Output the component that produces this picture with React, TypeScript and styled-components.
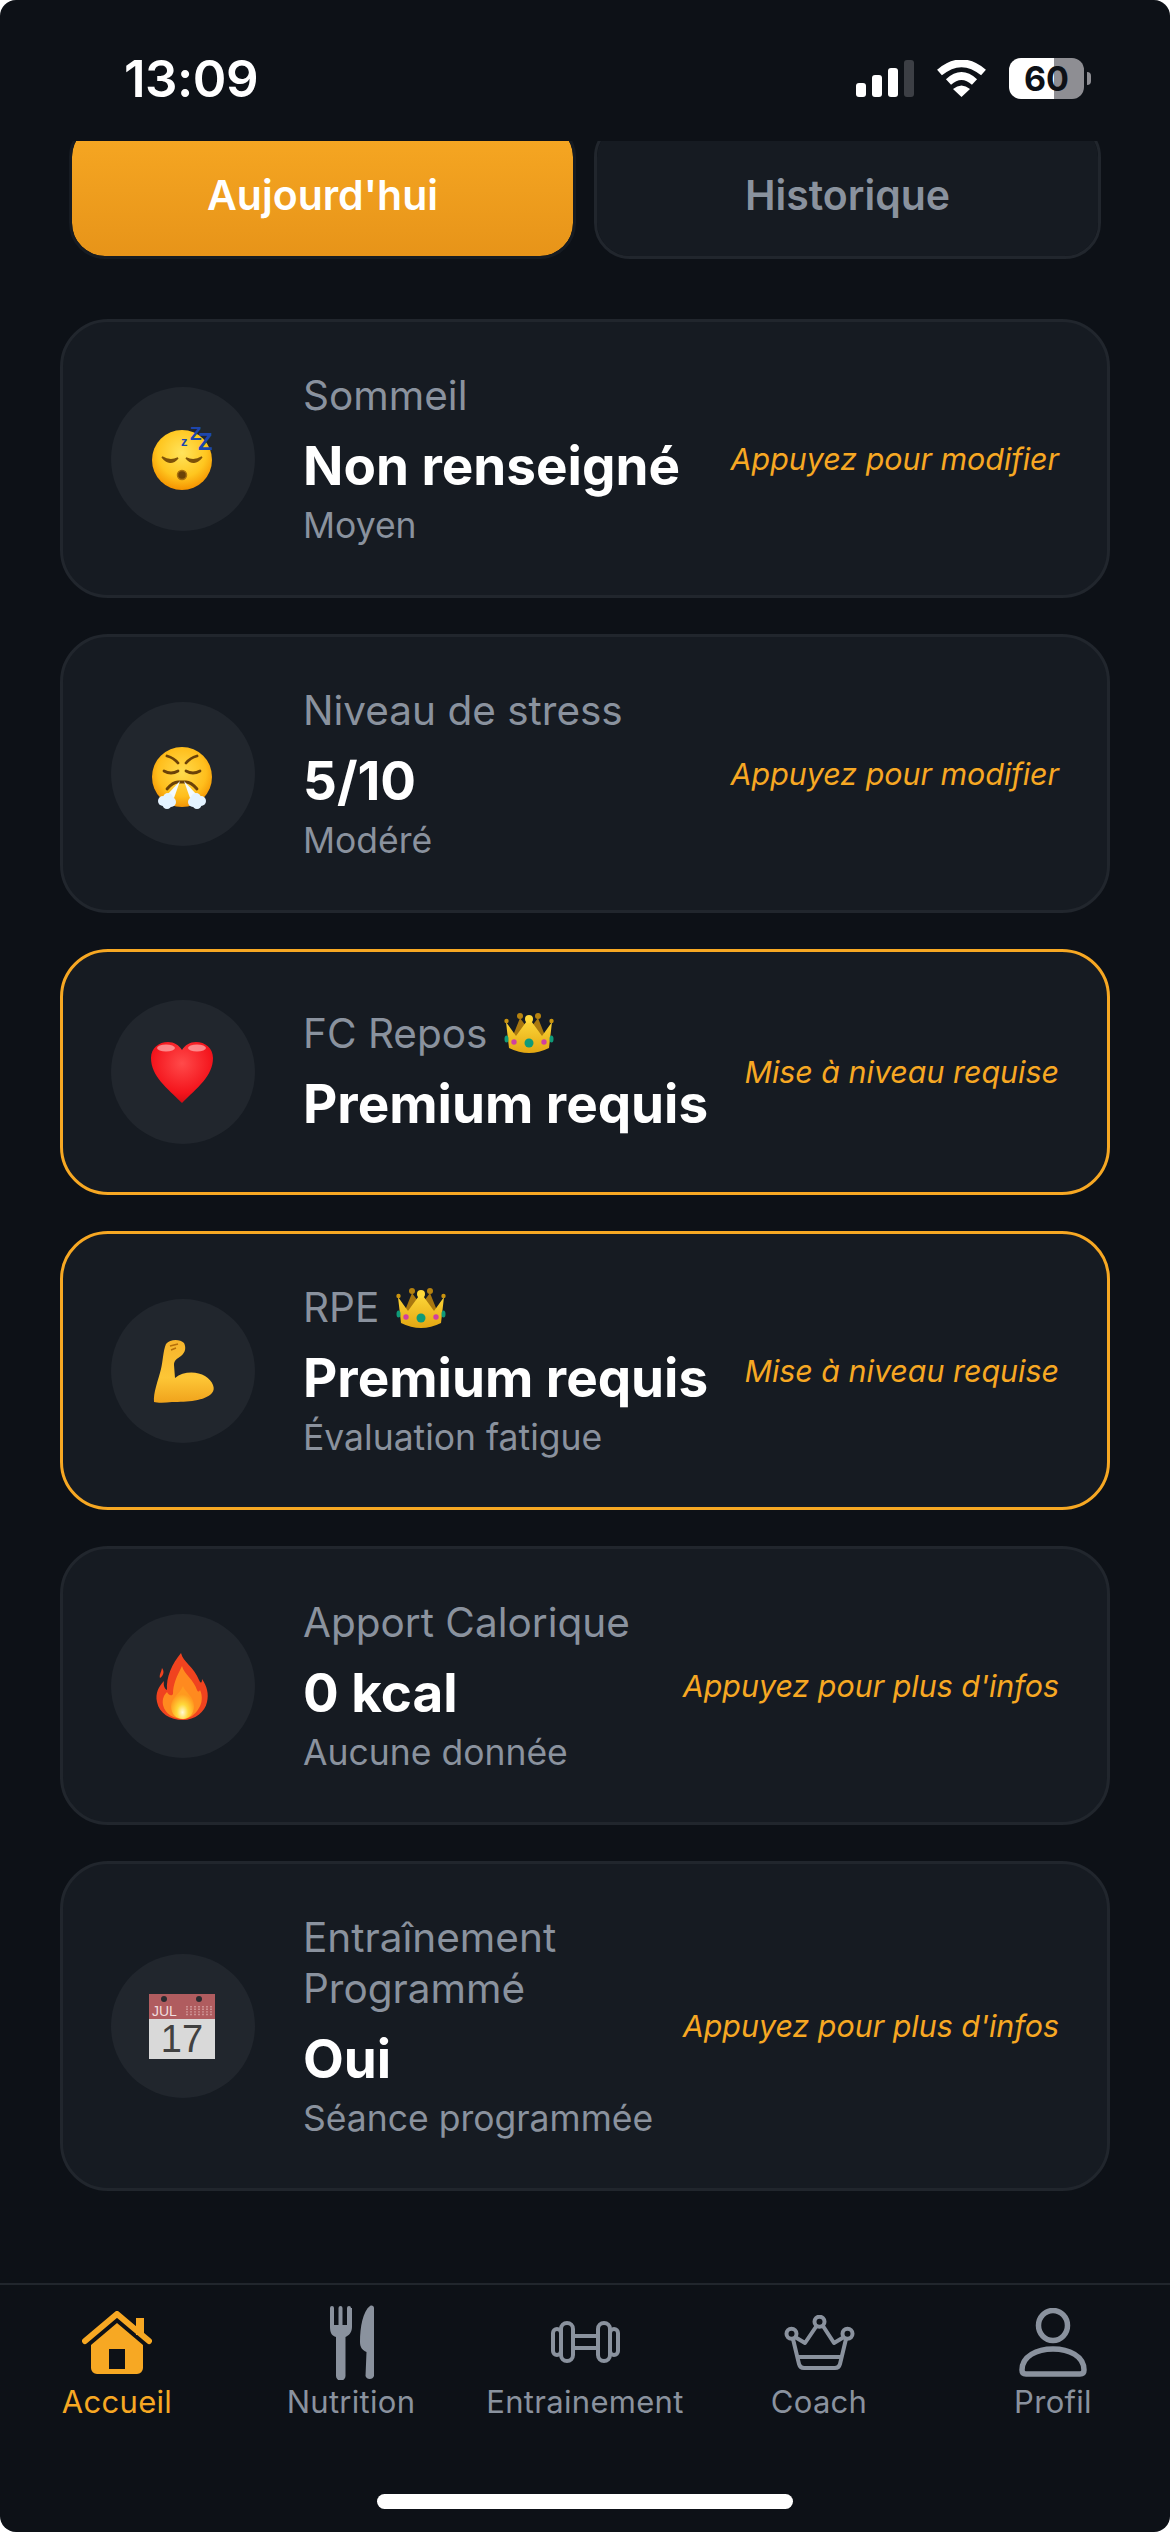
import React from 'react'
import styled, { createGlobalStyle } from 'styled-components'

const GlobalStyle = createGlobalStyle`
    html, body {
        margin: 0;
        padding: 0;
        background: #ffffff;
    }
    * {
        box-sizing: border-box;
    }
`

const ORANGE = '#f7a823'
const GREY = '#8a929e'

const Screen = styled.div`
    width: 1170px;
    height: 2532px;
    display: flex;
    flex-direction: column;
    overflow: hidden;
    border-radius: 16px;
    background: #0d1117;
    font-family: Inter, 'Noto Sans', sans-serif;
`

const StatusBar = styled.div`
    height: 141px;
    flex: none;
    padding: 15px 79px 0 124px;
    display: flex;
    align-items: center;
    justify-content: space-between;
`

const Time = styled.span`
    font-size: 51px;
    font-weight: 600;
    letter-spacing: -0.5px;
    color: #ffffff;
`

const StatusIcons = styled.div`
    display: flex;
    align-items: center;
    gap: 22px;
`

const Battery = styled.div`
    position: relative;
    width: 75px;
    height: 41px;
    margin-right: 7px;
    border-radius: 12px;
    background: linear-gradient(90deg, #ffffff 60%, #8e8e93 60%);
    display: flex;
    align-items: center;
    justify-content: center;
    font-size: 34px;
    font-weight: 700;
    color: #0d1117;

    &::after {
        content: '';
        position: absolute;
        left: 78px;
        top: 14px;
        width: 4px;
        height: 13px;
        border-radius: 0 6px 6px 0;
        background: #8e8e93;
    }
`

const Scroller = styled.div`
    flex: 1;
    min-height: 0;
    overflow: hidden;
`

const TabRow = styled.div`
    margin-top: -20px;
    padding: 0 69px;
    display: grid;
    grid-template-columns: 1fr 1fr;
    gap: 18px;
`

const Tab = styled.div<{ $active?: boolean }>`
    height: 138px;
    border-radius: 36px;
    border: 3px solid ${(p) => (p.$active ? '#161b22' : '#21262d')};
    background: ${(p) =>
        p.$active ? 'linear-gradient(#f7a823, #e79419)' : '#161b22'};
    background-clip: padding-box;
    padding-top: 9px;
    display: flex;
    align-items: center;
    justify-content: center;
    font-size: 41px;
    font-weight: 600;
    color: ${(p) => (p.$active ? '#ffffff' : GREY)};
`

const CardList = styled.div`
    margin-top: 60px;
    padding: 0 60px;
    display: flex;
    flex-direction: column;
    gap: 36px;
`

const Card = styled.div<{ $premium?: boolean }>`
    padding: 48px;
    border-radius: 48px;
    border: 3px solid ${(p) => (p.$premium ? ORANGE : '#21262d')};
    background: #161b22;
    display: flex;
    align-items: center;
`

const EmojiCircle = styled.div`
    width: 144px;
    height: 144px;
    flex: none;
    margin-right: 48px;
    border-radius: 50%;
    background: #21262d;
    display: flex;
    align-items: center;
    justify-content: center;
`

const CardBody = styled.div`
    flex: 1;
    min-width: 0;
    padding-right: 20px;
`

const CardLabel = styled.div`
    display: flex;
    align-items: center;
    gap: 17px;
    font-size: 40.5px;
    line-height: 51px;
    color: ${GREY};
`

const CardValue = styled.div`
    margin-top: 12px;
    font-size: 53px;
    line-height: 66px;
    font-weight: 700;
    color: #ffffff;
`

const CardSub = styled.div`
    margin-top: 5px;
    font-size: 35.5px;
    line-height: 43px;
    color: ${GREY};
`

const Hint = styled.div`
    flex: none;
    font-size: 30.4px;
    font-style: italic;
    color: ${ORANGE};
`

const TabBar = styled.div`
    height: 249px;
    flex: none;
    padding-top: 18px;
    border-top: 2px solid #21262d;
    display: flex;
    flex-direction: column;
    align-items: center;
`

const NavRow = styled.div`
    width: 100%;
    display: grid;
    grid-template-columns: repeat(5, 1fr);
`

const NavItem = styled.div<{ $active?: boolean }>`
    display: flex;
    flex-direction: column;
    align-items: center;
    font-size: 31px;
    letter-spacing: 0.3px;
    line-height: 40px;
    color: ${(p) => (p.$active ? ORANGE : GREY)};
`

const NavIcon = styled.div`
    height: 78px;
    margin-bottom: 1px;
    display: flex;
    align-items: center;
    justify-content: center;
`

const HomeBar = styled.div`
    width: 416px;
    height: 15px;
    margin-top: 72px;
    border-radius: 8px;
    background: #ffffff;
`

const SignalIcon = () => (
    <svg width="58" height="37" viewBox="0 0 58 37">
        <rect x="0" y="23" width="10" height="14" rx="3" fill="#fff" />
        <rect x="16" y="15" width="10" height="22" rx="3" fill="#fff" />
        <rect x="32" y="8" width="10" height="29" rx="3" fill="#fff" />
        <rect x="48" y="0" width="10" height="37" rx="3" fill="#3c3f45" />
    </svg>
)

const WifiIcon = () => (
    <svg width="51" height="37" viewBox="0 0 51 37" fill="none">
        <path d="M3.5 12.5Q25.5 -6 47.5 12.5" stroke="#fff" strokeWidth="7.5" />
        <path d="M12.5 22Q25.5 10 38.5 22" stroke="#fff" strokeWidth="7.5" />
        <path d="M17 29Q25.5 22 34 29L25.5 37Z" fill="#fff" />
    </svg>
)

const SleepyEmoji = () => (
    <svg width="72" height="72" viewBox="0 0 72 72">
        <defs>
            <radialGradient id="faceA" cx="50%" cy="38%" r="62%">
                <stop offset="0%" stopColor="#ffe45c" />
                <stop offset="65%" stopColor="#ffc61f" />
                <stop offset="100%" stopColor="#f59300" />
            </radialGradient>
        </defs>
        <circle cx="35" cy="37" r="30" fill="url(#faceA)" />
        <path d="M15 34Q23 44 31 35Q23 39 15 34Z" fill="#7d5209" stroke="#7d5209" strokeWidth="1.5" />
        <path d="M39 35Q47 44 55 34Q47 39 39 35Z" fill="#7d5209" stroke="#7d5209" strokeWidth="1.5" />
        <circle cx="35" cy="52" r="4.5" fill="#6b4208" stroke="#a9720f" strokeWidth="1.5" />
        <g fontFamily="'Liberation Sans', sans-serif" fontWeight="700" fill="#1d46ad">
            <text x="34" y="23" fontSize="13">z</text>
            <text x="43" y="17" fontSize="19">Z</text>
            <text x="51" y="27" fontSize="24">Z</text>
        </g>
    </svg>
)

const HuffEmoji = () => (
    <svg width="72" height="72" viewBox="0 0 72 72">
        <defs>
            <radialGradient id="faceB" cx="50%" cy="42%" r="62%">
                <stop offset="0%" stopColor="#ffdb4d" />
                <stop offset="65%" stopColor="#ffbe1c" />
                <stop offset="100%" stopColor="#f08c00" />
            </radialGradient>
        </defs>
        <circle cx="35" cy="39" r="30" fill="url(#faceB)" />
        <g fill="none" stroke="#6b4208" strokeWidth="2.8" strokeLinecap="round">
            <path d="M20 18Q27 20 31 25" />
            <path d="M50 18Q43 20 39 25" />
            <path d="M17 33Q24 37 31 33" />
            <path d="M39 33Q46 37 53 33" />
            <path d="M20 51Q26 44 31 44H39Q44 44 50 51" />
        </g>
        <path d="M33 43L19 58L27 60Z" fill="#f3fbff" />
        <path d="M37 43L51 58L43 60Z" fill="#f3fbff" />
        <g fill="#e4f3ff">
            <circle cx="16" cy="63" r="5" />
            <circle cx="21" cy="60" r="5" />
            <circle cx="24" cy="64" r="5" />
            <circle cx="20" cy="66.5" r="4.5" />
            <circle cx="46" cy="64" r="5" />
            <circle cx="49" cy="60" r="5" />
            <circle cx="54" cy="63" r="5" />
            <circle cx="50" cy="66.5" r="4.5" />
        </g>
    </svg>
)

const HeartEmoji = () => (
    <svg width="72" height="72" viewBox="0 0 72 72">
        <defs>
            <radialGradient id="heartFill" cx="50%" cy="35%" r="70%">
                <stop offset="0%" stopColor="#ff4a4a" />
                <stop offset="70%" stopColor="#f4141c" />
                <stop offset="100%" stopColor="#c80a12" />
            </radialGradient>
        </defs>
        <path
            d="M35 67C20 52 4 40 4 22C4 12 12 6 21 6C27 6 32 9 35 14C38 9 43 6 49 6C58 6 66 12 66 22C66 40 50 52 35 67Z"
            fill="url(#heartFill)"
        />
        <ellipse cx="19" cy="12" rx="9" ry="3.5" fill="#ffb3b3" opacity="0.7" />
        <ellipse cx="50" cy="12" rx="9" ry="3.5" fill="#ffb3b3" opacity="0.7" />
    </svg>
)

const MuscleEmoji = () => (
    <svg width="72" height="72" viewBox="0 0 72 72">
        <defs>
            <linearGradient id="armFill" x1="0" y1="0" x2="0" y2="1">
                <stop offset="0%" stopColor="#f6b42c" />
                <stop offset="60%" stopColor="#fdc636" />
                <stop offset="100%" stopColor="#f0a31c" />
            </linearGradient>
        </defs>
        <path
            d="M19 9C23 4 33 4 37 8C39 12 39 17 34 21C30 24 27 25 27 30L28 43C36 36 50 36 58 41C66 46 69 54 65 58C58 66 40 67 25 67C18 68 10 68 7 67C6 58 11 46 14 34C16 26 16 16 19 9Z"
            fill="url(#armFill)"
        />
        <path d="M23 11L31 9M24 15L29 13" stroke="#b56f0a" strokeWidth="1.4" fill="none" />
    </svg>
)

const FireEmoji = () => (
    <svg width="72" height="72" viewBox="0 0 72 72">
        <defs>
            <radialGradient id="fireCore" cx="50%" cy="80%" r="55%">
                <stop offset="0%" stopColor="#fffbd6" />
                <stop offset="45%" stopColor="#ffd83a" />
                <stop offset="100%" stopColor="#ff9a1f" />
            </radialGradient>
        </defs>
        <path
            d="M34 3C36 12 47 17 52 30C54 34 55 33 55 29C60 36 62 44 60 52C58 62 48 70 36 70C23 70 12 63 10 52C8 43 12 36 17 31C16 36 18 39 20 40C19 27 25 14 34 3Z"
            fill="#f0431f"
        />
        <path d="M15 18C14 23 12 25 13 28C16 26 18 22 15 18Z" fill="#f0431f" />
        <path
            d="M35 16C37 24 47 30 50 40C51 42 52 42 53 40C56 46 55 54 52 58C48 65 42 69 36 69C27 69 18 64 16 55C15 49 17 45 20 42C22 46 25 46 26 44C26 34 30 26 35 16Z"
            fill="#ff8a1f"
        />
        <path
            d="M36 36C38 42 47 47 47 56C47 64 42 69 36 69C29 69 24 64 24 56C24 48 33 44 36 36Z"
            fill="url(#fireCore)"
        />
    </svg>
)

const CalendarEmoji = () => (
    <svg width="72" height="72" viewBox="0 0 72 72">
        <rect x="2" y="4" width="66" height="65" fill="#d9d9d9" />
        <rect x="2" y="4" width="66" height="25" fill="#b05c5f" />
        <circle cx="17" cy="9" r="3" fill="#2b2b30" />
        <circle cx="52" cy="9" r="3" fill="#2b2b30" />
        <g fontFamily="'Liberation Sans', sans-serif">
            <text x="5" y="26" fontSize="14" fill="#f0dede">JUL</text>
            <text x="35" y="62" fontSize="38" fill="#414141" textAnchor="middle">17</text>
        </g>
        <path
            d="M40 16V26M44 16V26M48 16V26M52 16V26M56 16V26M60 16V26M64 16V26"
            stroke="#dba9aa"
            strokeWidth="1.4"
            strokeDasharray="1.4 1.2"
        />
    </svg>
)

const CrownEmoji = () => (
    <svg width="50" height="42" viewBox="0 0 50 42">
        <defs>
            <linearGradient id="crownFill" x1="0" y1="0" x2="0" y2="1">
                <stop offset="0%" stopColor="#ffd93b" />
                <stop offset="100%" stopColor="#e3a712" />
            </linearGradient>
        </defs>
        <path d="M8 26L16 6L25 18L34 6L42 26Z" fill="#a9780f" />
        <path d="M5 36L2 10L12 24L25 6L38 24L48 10L45 36Q25 46 5 36Z" fill="url(#crownFill)" />
        <circle cx="16" cy="4" r="3" fill="#b5820f" />
        <circle cx="34" cy="4" r="3" fill="#b5820f" />
        <circle cx="25" cy="7" r="4" fill="#ffd93b" />
        <circle cx="2.5" cy="9" r="2.2" fill="#c9930f" />
        <circle cx="47.5" cy="9" r="2.2" fill="#c9930f" />
        <circle cx="25" cy="31" r="4.5" fill="#0f9a78" />
        <circle cx="10" cy="30" r="2.7" fill="#d13fa0" />
        <circle cx="40" cy="30" r="2.7" fill="#d13fa0" />
        <ellipse cx="2.5" cy="27" rx="2" ry="3.5" fill="#0f9a78" />
        <ellipse cx="47.5" cy="27" rx="2" ry="3.5" fill="#0f9a78" />
    </svg>
)

const HomeIcon = () => (
    <svg width="70" height="63" viewBox="0 0 70 63">
        <path d="M3 30L35 3L67 30" fill="none" stroke={ORANGE} strokeWidth="6" strokeLinecap="round" strokeLinejoin="round" />
        <rect x="54" y="7" width="8" height="17" fill={ORANGE} />
        <path
            d="M35 12L61 34V57A6 6 0 0 1 55 63H15A6 6 0 0 1 9 57V34ZM27 38V58H43V38Z"
            fill={ORANGE}
            fillRule="evenodd"
        />
    </svg>
)

const CutleryIcon = () => (
    <svg width="45" height="75" viewBox="0 0 45 75" fill={GREY}>
        <path d="M1 3A2 2 0 0 1 5 3V20H9.5V3A2 2 0 0 1 13.5 3V20H18V3A2 2 0 0 1 22 3H23V22C23 28 19 31 16.5 32V71A4.5 4.5 0 0 1 7 71V32C3 31 1 28 1 22Z" />
        <path d="M45 3V71A4.5 4.5 0 0 1 36.5 71L37.5 47C33 45 31 42 31 37C31 22 34 6 41 1C43 0 45 1 45 3Z" />
    </svg>
)

const DumbbellIcon = () => (
    <svg width="69" height="42" viewBox="0 0 69 42" fill="none" stroke={GREY} strokeWidth="4">
        <rect x="2" y="8" width="8" height="26" rx="4" />
        <rect x="10" y="2" width="12" height="38" rx="6" />
        <rect x="47" y="2" width="12" height="38" rx="6" />
        <rect x="59" y="8" width="8" height="26" rx="4" />
        <rect x="22" y="15" width="25" height="12" />
    </svg>
)

const CrownIcon = () => (
    <svg width="71" height="55" viewBox="0 0 71 55" fill="none" stroke={GREY} strokeWidth="4" strokeLinejoin="round">
        <circle cx="35.5" cy="6.7" r="5" />
        <circle cx="7.5" cy="18.7" r="5" />
        <circle cx="63.5" cy="18.7" r="5" />
        <path d="M11 22L21 28L32.5 11M39 11L50 28L60 22" />
        <path d="M9 24L15 49Q16 53 20 53H51Q55 53 56 49L62 24" />
        <path d="M13 42H58" />
    </svg>
)

const ProfileIcon = () => (
    <svg width="68" height="69" viewBox="0 0 68 69" fill="none" stroke={GREY} strokeWidth="5.5">
        <ellipse cx="34" cy="17.5" rx="14.5" ry="15" />
        <path d="M3 62C3 48 18 41 34 41C50 41 65 48 65 62Q65 66 61 66H7Q3 66 3 62Z" />
    </svg>
)

type Metric = {
    emoji: React.ReactNode
    label: string
    value: string
    sub?: string
    hint: string
    premium?: boolean
}

const metrics: Metric[] = [
    { emoji: <SleepyEmoji />, label: 'Sommeil', value: 'Non renseigné', sub: 'Moyen', hint: 'Appuyez pour modifier' },
    { emoji: <HuffEmoji />, label: 'Niveau de stress', value: '5/10', sub: 'Modéré', hint: 'Appuyez pour modifier' },
    { emoji: <HeartEmoji />, label: 'FC Repos', value: 'Premium requis', hint: 'Mise à niveau requise', premium: true },
    { emoji: <MuscleEmoji />, label: 'RPE', value: 'Premium requis', sub: 'Évaluation fatigue', hint: 'Mise à niveau requise', premium: true },
    { emoji: <FireEmoji />, label: 'Apport Calorique', value: '0 kcal', sub: 'Aucune donnée', hint: "Appuyez pour plus d'infos" },
    { emoji: <CalendarEmoji />, label: 'Entraînement Programmé', value: 'Oui', sub: 'Séance programmée', hint: "Appuyez pour plus d'infos" },
]

const navItems = [
    { label: 'Accueil', icon: <HomeIcon />, active: true },
    { label: 'Nutrition', icon: <CutleryIcon /> },
    { label: 'Entrainement', icon: <DumbbellIcon /> },
    { label: 'Coach', icon: <CrownIcon /> },
    { label: 'Profil', icon: <ProfileIcon /> },
]

export default function App() {
    return (
        <Screen>
            <GlobalStyle />
            <StatusBar>
                <Time>13:09</Time>
                <StatusIcons>
                    <SignalIcon />
                    <WifiIcon />
                    <Battery>60</Battery>
                </StatusIcons>
            </StatusBar>
            <Scroller>
                <TabRow>
                    <Tab $active>Aujourd'hui</Tab>
                    <Tab>Historique</Tab>
                </TabRow>
                <CardList>
                    {metrics.map((m) => (
                        <Card key={m.label} $premium={m.premium}>
                            <EmojiCircle>{m.emoji}</EmojiCircle>
                            <CardBody>
                                <CardLabel>
                                    {m.label}
                                    {m.premium && <CrownEmoji />}
                                </CardLabel>
                                <CardValue>{m.value}</CardValue>
                                {m.sub && <CardSub>{m.sub}</CardSub>}
                            </CardBody>
                            <Hint>{m.hint}</Hint>
                        </Card>
                    ))}
                </CardList>
            </Scroller>
            <TabBar>
                <NavRow>
                    {navItems.map((n) => (
                        <NavItem key={n.label} $active={n.active}>
                            <NavIcon>{n.icon}</NavIcon>
                            {n.label}
                        </NavItem>
                    ))}
                </NavRow>
                <HomeBar />
            </TabBar>
        </Screen>
    )
}
